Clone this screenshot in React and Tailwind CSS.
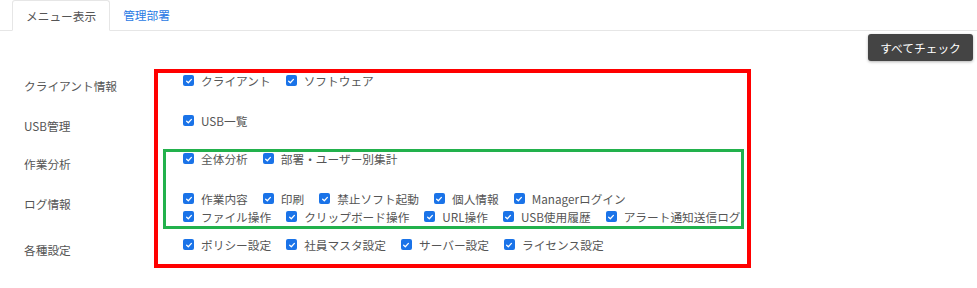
import React from "react";

const Check = () => (
  <span className="inline-flex items-center justify-center w-[11px] h-[11px] rounded-[2px] bg-[#1a73e8] mr-[7px] shrink-0">
    <svg viewBox="0 0 12 12" className="w-[8px] h-[8px]">
      <path d="M2.5 6.3 L5 8.6 L9.6 3.6" fill="none" stroke="white" strokeWidth="1.9" strokeLinecap="round" strokeLinejoin="round" />
    </svg>
  </span>
);

const Item = ({ label }) => (
  <span className="inline-flex items-center mr-[15px] whitespace-nowrap">
    <Check />
    <span>{label}</span>
  </span>
);

const Line = ({ items }) => (
  <div className="flex items-center h-[18px] pl-[183px]">
    {items.map((t) => (
      <Item key={t} label={t} />
    ))}
  </div>
);

const Row = ({ label, lines, h }) => (
  <div className={`relative flex ${h}`}>
    <div className="absolute left-[24px] top-[5px] leading-[18px]">{label}</div>
    <div className="flex flex-col">
      {lines.map((l, i) => (
        <Line key={i} items={l} />
      ))}
    </div>
  </div>
);

export default function App() {
  return (
    <div className="relative w-[977px] h-[288px] bg-white text-[#555] text-[11.7px] font-['Noto_Sans_CJK_JP',sans-serif] overflow-hidden">
      <div className="flex pl-[12px] border-b border-[#e6e6e6] h-[31px]">
        <div className="h-[31px] px-[13px] flex items-center border border-[#e6e6e6] border-b-white rounded-t-[3px] bg-white text-[#555]">
          メニュー表示
        </div>
        <div className="h-[30px] px-[13px] flex items-center text-[#2a7be4]">管理部署</div>
      </div>
      <div className="flex justify-end pr-[4px] mt-[3px]">
        <div className="h-[27px] w-[105px] flex items-center justify-center bg-[#444] text-white rounded-[3px] shadow-[0_1px_3px_rgba(0,0,0,0.3)]">
          すべてチェック
        </div>
      </div>
      <div className="mt-[11px] flex flex-col">
        <div className="h-[40px]">
          <Row label="クライアント情報" lines={[["クライアント", "ソフトウェア"]]} h="h-[40px]" />
        </div>
        <Row label="USB管理" lines={[["USB一覧"]]} h="h-[38px]" />
        <Row label="作業分析" lines={[["全体分析", "部署・ユーザー別集計"]]} h="h-[40px]" />
        <Row
          label="ログ情報"
          lines={[
            ["作業内容", "印刷", "禁止ソフト起動", "個人情報", "Managerログイン"],
            ["ファイル操作", "クリップボード操作", "URL操作", "USB使用履歴", "アラート通知送信ログ"],
          ]}
          h="h-[46px]"
        />
        <Row label="各種設定" lines={[["ポリシー設定", "社員マスタ設定", "サーバー設定", "ライセンス設定"]]} h="h-[30px]" />
      </div>
      <div className="absolute left-[154px] top-[69px] w-[597px] h-[199px] border-[4px] border-[#ff0000] pointer-events-none" />
      <div className="absolute left-[163px] top-[149px] w-[581px] h-[80px] border-[3px] border-[#22b14c] pointer-events-none" />
    </div>
  );
}
